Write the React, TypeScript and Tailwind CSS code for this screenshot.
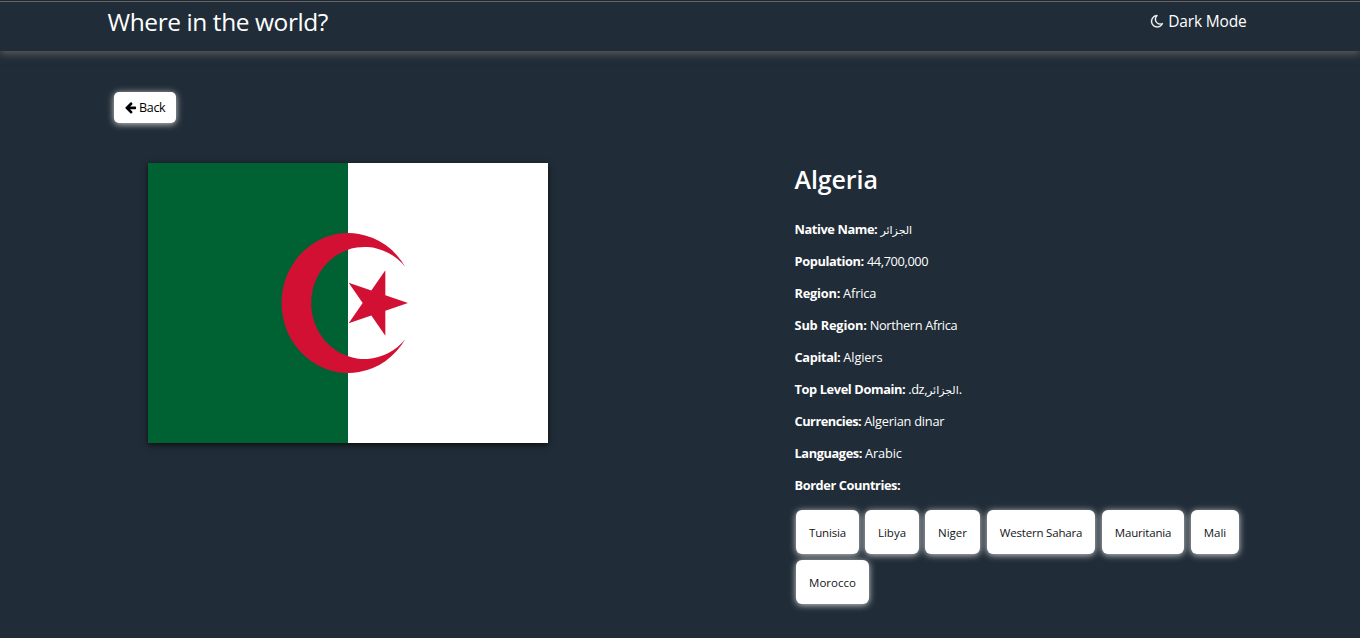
import type { ReactNode } from 'react';

const arabic = 'الجزائر';

function Arabic() {
  return <bdi className="font-['DejaVu_Sans',sans-serif] text-[11px] leading-none tracking-normal">{arabic}</bdi>;
}

type Fact = { label: string; labelClass: string; value?: ReactNode; valueClass?: string };

const facts: Fact[] = [
  { label: 'Native Name:', labelClass: 'tracking-[-0.4px]', value: <Arabic /> },
  { label: 'Population:', labelClass: 'tracking-[-0.38px]', value: '44,700,000', valueClass: 'tracking-[-0.38px]' },
  { label: 'Region:', labelClass: 'tracking-[-0.22px]', value: 'Africa', valueClass: 'tracking-[-0.15px]' },
  { label: 'Sub Region:', labelClass: 'tracking-[-0.17px]', value: 'Northern Africa', valueClass: 'tracking-[-0.33px]' },
  { label: 'Capital:', labelClass: 'tracking-[-0.36px]', value: 'Algiers', valueClass: 'tracking-[-0.15px]' },
  {
    label: 'Top Level Domain:',
    labelClass: 'tracking-[-0.38px]',
    value: (
      <>
        .dz,
        <Arabic />.
      </>
    ),
    valueClass: 'tracking-[-0.45px]',
  },
  { label: 'Currencies:', labelClass: 'tracking-[-0.5px]', value: 'Algerian dinar', valueClass: 'tracking-[-0.24px]' },
  { label: 'Languages:', labelClass: 'tracking-[-0.4px]', value: 'Arabic', valueClass: 'tracking-[-0.15px]' },
  { label: 'Border Countries:', labelClass: 'tracking-[-0.42px]' },
];

const borders = [
  { name: 'Tunisia', size: 'w-[63px] mr-1.5 tracking-[-0.15px]' },
  { name: 'Libya', size: 'w-[54px] mr-1.5' },
  { name: 'Niger', size: 'w-[55px] mr-[7px]' },
  { name: 'Western Sahara', size: 'w-[108px] mr-[7px] tracking-[-0.2px]' },
  { name: 'Mauritania', size: 'w-[82px] mr-[7px] tracking-[-0.17px]' },
  { name: 'Mali', size: 'w-[48px]' },
  { name: 'Morocco', size: 'w-[73px]' },
];

function MoonIcon() {
  return (
    <svg viewBox="0 0 1792 1792" className="size-[14.500px]" fill="currentColor" stroke="currentColor" strokeWidth="40" aria-hidden="true">
      <path d="M1390 1303q-54 9-110 9-182 0-337-90t-245-245-90-337q0-192 104-357-201 60-328.500 229t-127.500 384q0 130 51 248.500t136.500 204 204 136.500 248.500 51q144 0 273.500-61.500t220.500-171.500zm203-85q-94 203-283.500 324.500t-413.500 121.500q-156 0-298-61t-245-164-164-245-61-298q0-153 57.500-292.500t156-241.500 235.500-164.500 290-68.500q44-2 61 39 18 41-15 72-86 78-131.500 181.500t-45.500 218.500q0 148 73 273t198 198 273 73q118 0 228-51 41-18 72 13 14 14 17.500 34t-4.500 38z" />
    </svg>
  );
}

function ArrowIcon() {
  return (
    <svg viewBox="0 0 1792 1792" className="size-[13px]" fill="currentColor" aria-hidden="true">
      <path d="M1664 896v128q0 53-32.500 90.500t-84.500 37.500h-704l293 294q38 36 38 90t-38 90l-75 76q-37 37-90 37-52 0-91-37l-651-652q-37-37-37-90 0-52 37-91l651-650q38-38 91-38 52 0 90 38l75 74q38 38 38 91t-38 91l-293 293h704q52 0 84.500 37.500t32.500 90.500z" />
    </svg>
  );
}

function Flag() {
  return (
    <svg
      viewBox="0 0 600 400"
      preserveAspectRatio="none"
      className="h-[280px] w-[400px] shadow-[0_2px_6px_rgba(0,0,0,0.7)]"
      role="img"
    >
      <path fill="#fff" d="M300 0h300v400H300z" />
      <path fill="#006233" d="M0 0h300v400H0z" />
      <path
        fill="#d21034"
        d="M386 148.500A100 100 0 1 0 386 251.500A80 80 0 1 1 386 148.500zM390 200L356 188.900V153.200L335 182.100L301 171L322 200L301 229L335 217.900L356 246.800V211.100z"
      />
    </svg>
  );
}

export default function App() {
  return (
    <div className="flex h-[638px] flex-col overflow-hidden bg-[#202c37] font-['Open_Sans',sans-serif] text-white">
      <header className="flex h-[51px] shrink-0 justify-between border-t border-[#22272d] pr-[113.500px] pl-[107.500px] shadow-[inset_0_1px_0_#62676c,0_3px_8px_#5c5c5c]">
        <h1 className="pt-[5px] text-[24.500px] leading-8 tracking-[-0.42px]">Where in the world?</h1>
        <button className="mt-2 flex h-6 items-center gap-[3.500px] self-start text-[15.500px] leading-6 tracking-[-0.18px]">
          <MoonIcon />
          <span>Dark Mode</span>
        </button>
      </header>

      <main className="flex flex-col pl-[114px]">
        <button className="mt-[41px] flex h-[31px] w-[62px] items-center gap-[2.500px] rounded-[5px] bg-white pl-[9.500px] text-[12.500px] tracking-[-0.3px] text-black shadow-[0_1px_7px_rgba(230,230,230,0.9)]">
          <ArrowIcon />
          <span className="pt-[2px]">Back</span>
        </button>

        <div className="mt-10 flex pl-[34px]">
          <Flag />
          <section className="ml-[246.500px] w-[470px]">
            <h2 className="-mt-px text-[25px] leading-[34px] font-semibold tracking-[-0.1px]">Algeria</h2>
            <dl className="mt-[18px] text-[12.800px]">
              {facts.map((fact) => (
                <div key={fact.label} className="flex h-8 items-center gap-[3px]">
                  <dt className={`font-bold ${fact.labelClass}`}>{fact.label}</dt>
                  {fact.value && <dd className={fact.valueClass}>{fact.value}</dd>}
                </div>
              ))}
            </dl>
            <div className="mt-2 flex flex-wrap gap-y-1.5 pl-[1.500px]">
              {borders.map(({ name, size }) => (
                <button
                  key={name}
                  className={`h-11 rounded-[6px] bg-white pt-[2px] text-[11.500px] whitespace-nowrap text-[#111517] shadow-[0_1px_7px_rgba(230,230,230,0.9)] ${size}`}
                >
                  {name}
                </button>
              ))}
            </div>
          </section>
        </div>
      </main>
    </div>
  );
}
